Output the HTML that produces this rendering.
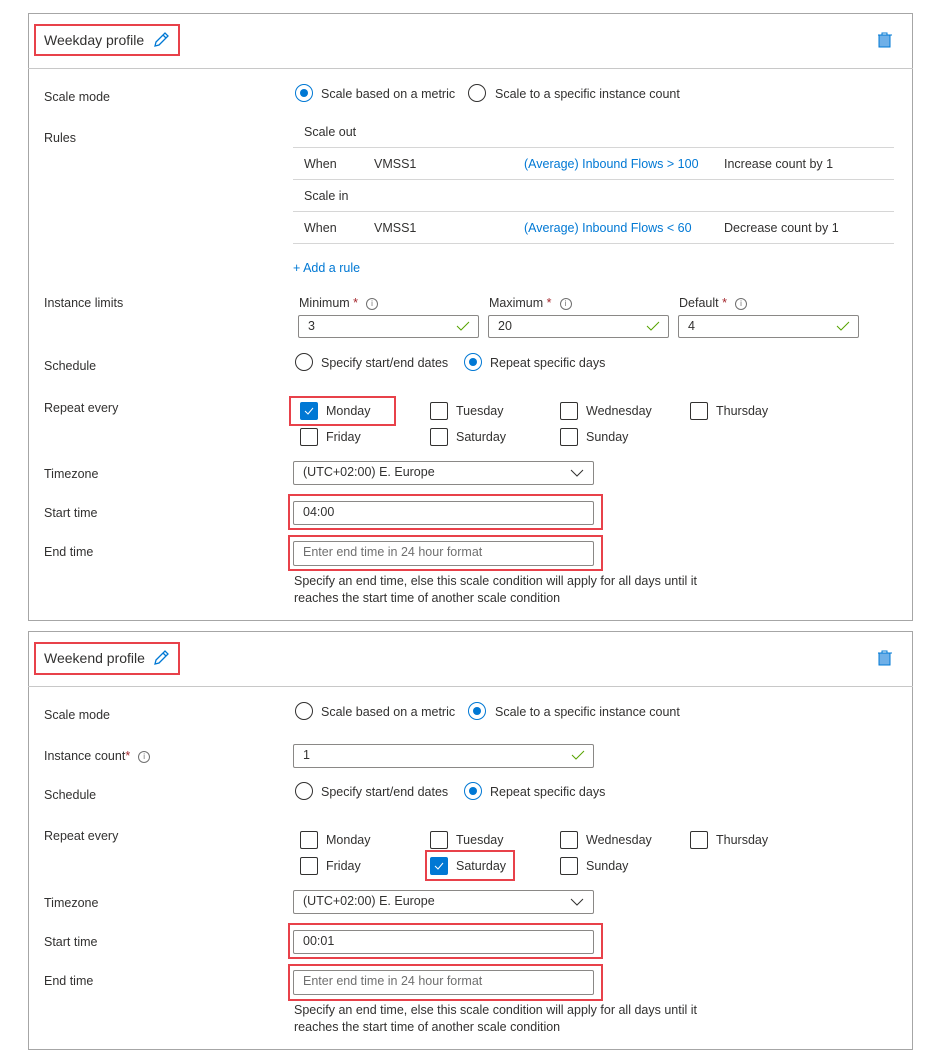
<!DOCTYPE html>
<html><head><meta charset="utf-8"><style>
*{box-sizing:border-box;margin:0;padding:0}
body{width:937px;height:1057px;background:#fff;position:relative;font-family:"Liberation Sans",sans-serif;font-size:12.5px;color:#323130;overflow:hidden}
.a{position:absolute;white-space:nowrap;line-height:16px}
.panel{position:absolute;left:28px;width:885px;border:1px solid #a6a6a6}
.hl{position:absolute;left:28px;width:885px;height:1px;background:#c8c8c8}
.red{position:absolute;border:2px solid #e8414a}
.radio{position:absolute;width:18px;height:18px;border:1px solid #323130;border-radius:50%}
.radio.on{border-color:#0078d4}
.radio.on::after{content:"";position:absolute;left:4px;top:4px;width:8px;height:8px;border-radius:50%;background:#0078d4}
.cb{position:absolute;width:18px;height:18px;border:1px solid #323130;border-radius:2px}
.cb.on{background:#0078d4;border-color:#0078d4}
.inp{position:absolute;border:1px solid #8a8886;border-radius:2px;height:23px;padding-left:9px;line-height:21px}
.ph{color:#707070}
.chk{position:absolute;right:8px;top:4px}
.line{position:absolute;left:293px;width:601px;height:1px;background:#d6d6d6}
.blue{color:#0078d4}
.info{display:inline-block;width:12px;height:12px;border:1px solid #707070;border-radius:50%;font-size:8px;line-height:10px;text-align:center;color:#707070;vertical-align:middle;margin-left:8px}
.star{color:#a4262c}
</style></head><body>

<!-- PANEL 1 -->
<div class="panel" style="top:13px;height:608px"></div>
<div class="hl" style="top:68px"></div>
<div class="red" style="left:34px;top:24px;width:146px;height:32px"></div>
<div class="a" style="left:44px;top:32px;font-size:14px">Weekday profile</div>
<svg class="a" style="left:152px;top:31px" width="18" height="18" viewBox="0 0 18 18"><path d="M3 15 L4 11 L13 2 L16 5 L7 14 Z M11 4 L14 7" fill="none" stroke="#0078d4" stroke-width="1.3"/></svg>
<svg class="a" style="left:877px;top:31px" width="16" height="18" viewBox="0 0 16 18"><rect x="2" y="4" width="11" height="12" fill="#6fb0e8" stroke="#0078d4"/><path d="M1 4H15M5 4V2H10V4" stroke="#0078d4" fill="none"/></svg>

<div class="a" style="left:44px;top:89px">Scale mode</div>
<div class="radio on" style="left:295px;top:84px"></div><div class="a" style="left:321px;top:86px">Scale based on a metric</div>
<div class="radio" style="left:468px;top:84px"></div><div class="a" style="left:495px;top:86px">Scale to a specific instance count</div>

<div class="a" style="left:44px;top:130px">Rules</div>
<div class="a" style="left:304px;top:124px">Scale out</div>
<div class="line" style="top:147px"></div>
<div class="a" style="left:304px;top:156px">When</div><div class="a" style="left:374px;top:156px">VMSS1</div>
<div class="a blue" style="left:524px;top:156px">(Average) Inbound Flows &gt; 100</div><div class="a" style="left:724px;top:156px">Increase count by 1</div>
<div class="line" style="top:179px"></div>
<div class="a" style="left:304px;top:188px">Scale in</div>
<div class="line" style="top:211px"></div>
<div class="a" style="left:304px;top:220px">When</div><div class="a" style="left:374px;top:220px">VMSS1</div>
<div class="a blue" style="left:524px;top:220px">(Average) Inbound Flows &lt; 60</div><div class="a" style="left:724px;top:220px">Decrease count by 1</div>
<div class="line" style="top:243px"></div>
<div class="a blue" style="left:293px;top:260px">+ Add a rule</div>

<div class="a" style="left:44px;top:295px">Instance limits</div>
<div class="a" style="left:299px;top:295px">Minimum <span class="star">*</span><span class="info">i</span></div>
<div class="a" style="left:489px;top:295px">Maximum <span class="star">*</span><span class="info">i</span></div>
<div class="a" style="left:679px;top:295px">Default <span class="star">*</span><span class="info">i</span></div>
<div class="inp" style="left:298px;top:315px;width:181px">3<svg class="chk" width="14" height="12"><path d="M1 6L5 10L13 2" stroke="#57a300" fill="none"/></svg></div>
<div class="inp" style="left:488px;top:315px;width:181px">20<svg class="chk" width="14" height="12"><path d="M1 6L5 10L13 2" stroke="#57a300" fill="none"/></svg></div>
<div class="inp" style="left:678px;top:315px;width:181px">4<svg class="chk" width="14" height="12"><path d="M1 6L5 10L13 2" stroke="#57a300" fill="none"/></svg></div>

<div class="a" style="left:44px;top:358px">Schedule</div>
<div class="radio" style="left:295px;top:353px"></div><div class="a" style="left:321px;top:355px">Specify start/end dates</div>
<div class="radio on" style="left:464px;top:353px"></div><div class="a" style="left:490px;top:355px">Repeat specific days</div>

<div class="a" style="left:44px;top:400px">Repeat every</div>
<div class="red" style="left:289px;top:396px;width:107px;height:30px"></div>
<div class="cb on" style="left:300px;top:402px"><svg width="16" height="16" style="position:absolute;left:0;top:0"><path d="M4 8L7 11L12 5" stroke="#fff" fill="none"/></svg></div><div class="a" style="left:326px;top:403px">Monday</div>
<div class="cb" style="left:430px;top:402px"></div><div class="a" style="left:456px;top:403px">Tuesday</div>
<div class="cb" style="left:560px;top:402px"></div><div class="a" style="left:586px;top:403px">Wednesday</div>
<div class="cb" style="left:690px;top:402px"></div><div class="a" style="left:716px;top:403px">Thursday</div>
<div class="cb" style="left:300px;top:428px"></div><div class="a" style="left:326px;top:429px">Friday</div>
<div class="cb" style="left:430px;top:428px"></div><div class="a" style="left:456px;top:429px">Saturday</div>
<div class="cb" style="left:560px;top:428px"></div><div class="a" style="left:586px;top:429px">Sunday</div>

<div class="a" style="left:44px;top:466px">Timezone</div>
<div class="inp" style="left:293px;top:461px;width:301px;height:24px">(UTC+02:00) E. Europe<svg style="position:absolute;right:9px;top:7px" width="14" height="9"><path d="M1 1L7 7L13 1" stroke="#323130" fill="none"/></svg></div>

<div class="a" style="left:44px;top:505px">Start time</div>
<div class="red" style="left:288px;top:494px;width:315px;height:36px"></div>
<div class="inp" style="left:293px;top:501px;width:301px;height:24px">04:00</div>
<div class="a" style="left:44px;top:544px">End time</div>
<div class="red" style="left:288px;top:535px;width:315px;height:36px"></div>
<div class="inp ph" style="left:293px;top:541px;width:301px;height:25px">Enter end time in 24 hour format</div>
<div class="a" style="left:294px;top:573px">Specify an end time, else this scale condition will apply for all days until it</div>
<div class="a" style="left:294px;top:590px">reaches the start time of another scale condition</div>

<!-- PANEL 2 -->
<div class="panel" style="top:631px;height:419px"></div>
<div class="hl" style="top:686px"></div>
<div class="red" style="left:34px;top:642px;width:146px;height:33px"></div>
<div class="a" style="left:44px;top:650px;font-size:14px">Weekend profile</div>
<svg class="a" style="left:152px;top:649px" width="18" height="18" viewBox="0 0 18 18"><path d="M3 15 L4 11 L13 2 L16 5 L7 14 Z M11 4 L14 7" fill="none" stroke="#0078d4" stroke-width="1.3"/></svg>
<svg class="a" style="left:877px;top:649px" width="16" height="18" viewBox="0 0 16 18"><rect x="2" y="4" width="11" height="12" fill="#6fb0e8" stroke="#0078d4"/><path d="M1 4H15M5 4V2H10V4" stroke="#0078d4" fill="none"/></svg>

<div class="a" style="left:44px;top:707px">Scale mode</div>
<div class="radio" style="left:295px;top:702px"></div><div class="a" style="left:321px;top:704px">Scale based on a metric</div>
<div class="radio on" style="left:468px;top:702px"></div><div class="a" style="left:495px;top:704px">Scale to a specific instance count</div>

<div class="a" style="left:44px;top:748px">Instance count<span class="star">*</span><span class="info">i</span></div>
<div class="inp" style="left:293px;top:744px;width:301px;height:24px">1<svg class="chk" width="14" height="12"><path d="M1 6L5 10L13 2" stroke="#57a300" fill="none"/></svg></div>

<div class="a" style="left:44px;top:787px">Schedule</div>
<div class="radio" style="left:295px;top:782px"></div><div class="a" style="left:321px;top:784px">Specify start/end dates</div>
<div class="radio on" style="left:464px;top:782px"></div><div class="a" style="left:490px;top:784px">Repeat specific days</div>

<div class="a" style="left:44px;top:828px">Repeat every</div>
<div class="cb" style="left:300px;top:831px"></div><div class="a" style="left:326px;top:832px">Monday</div>
<div class="cb" style="left:430px;top:831px"></div><div class="a" style="left:456px;top:832px">Tuesday</div>
<div class="cb" style="left:560px;top:831px"></div><div class="a" style="left:586px;top:832px">Wednesday</div>
<div class="cb" style="left:690px;top:831px"></div><div class="a" style="left:716px;top:832px">Thursday</div>
<div class="cb" style="left:300px;top:857px"></div><div class="a" style="left:326px;top:858px">Friday</div>
<div class="red" style="left:425px;top:850px;width:90px;height:31px"></div>
<div class="cb on" style="left:430px;top:857px"><svg width="16" height="16" style="position:absolute;left:0;top:0"><path d="M4 8L7 11L12 5" stroke="#fff" fill="none"/></svg></div><div class="a" style="left:456px;top:858px">Saturday</div>
<div class="cb" style="left:560px;top:857px"></div><div class="a" style="left:586px;top:858px">Sunday</div>

<div class="a" style="left:44px;top:895px">Timezone</div>
<div class="inp" style="left:293px;top:890px;width:301px;height:24px">(UTC+02:00) E. Europe<svg style="position:absolute;right:9px;top:7px" width="14" height="9"><path d="M1 1L7 7L13 1" stroke="#323130" fill="none"/></svg></div>

<div class="a" style="left:44px;top:934px">Start time</div>
<div class="red" style="left:288px;top:923px;width:315px;height:36px"></div>
<div class="inp" style="left:293px;top:930px;width:301px;height:24px">00:01</div>
<div class="a" style="left:44px;top:973px">End time</div>
<div class="red" style="left:288px;top:964px;width:315px;height:37px"></div>
<div class="inp ph" style="left:293px;top:970px;width:301px;height:25px">Enter end time in 24 hour format</div>
<div class="a" style="left:294px;top:1002px">Specify an end time, else this scale condition will apply for all days until it</div>
<div class="a" style="left:294px;top:1019px">reaches the start time of another scale condition</div>
</body></html>
